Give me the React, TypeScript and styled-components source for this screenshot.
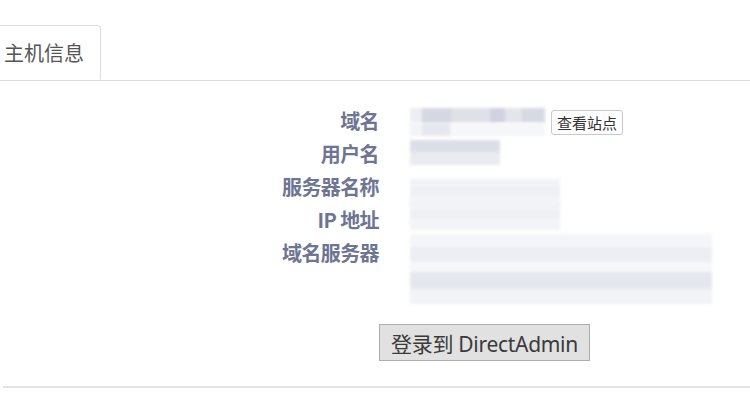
import React from "react";
import styled, { createGlobalStyle } from "styled-components";

const Global = createGlobalStyle`
  html, body { margin: 0; padding: 0; background: #fff; }
  body { font-family: "Noto Sans", "Noto Sans CJK SC", sans-serif; }
`;

const Page = styled.div`
  width: 750px;
  height: 417px;
  overflow: hidden;
  padding-top: 25px;
  box-sizing: border-box;
`;

const TabBar = styled.div`
  display: flex;
  border-bottom: 1px solid #dedede;
  height: 55px;
`;

const Tab = styled.div`
  margin-left: -1px;
  width: 102px;
  height: 55px;
  box-sizing: border-box;
  border: 1px solid #dedede;
  border-bottom: 1px solid #fff;
  border-radius: 0 4px 0 0;
  background: #fff;
  display: flex;
  align-items: center;
  padding-left: 4px;
  font-family: "Noto Sans CJK SC", sans-serif;
  font-size: 20px;
  color: #555;
  margin-bottom: -1px;
`;

const InfoGrid = styled.div`
  display: grid;
  grid-template-columns: 379px 1fr;
  column-gap: 31px;
  padding-top: 23px;
`;

const Label = styled.div<{ $tall?: boolean }>`
  text-align: right;
  font-family: "Noto Sans CJK SC", sans-serif;
  font-weight: 700;
  font-size: 20px;
  line-height: 33px;
  height: ${(p) => (p.$tall ? "70px" : "33px")};
  color: #6e7593;
  letter-spacing: -0.6px;
`;

const Value = styled.div<{ $tall?: boolean }>`
  display: flex;
  align-items: center;
  gap: 6px;
  height: ${(p) => (p.$tall ? "70px" : "33px")};
`;

const Blur = styled.div<{ $w: number; $h: number; $bg: string; $lift?: number }>`
  width: ${(p) => p.$w}px;
  height: ${(p) => p.$h}px;
  background: ${(p) => p.$bg};
  filter: blur(1.5px);
  transform: translateY(${(p) => p.$lift ?? 0}px);
`;

const SmallButton = styled.button`
  font-family: "Noto Sans CJK SC", sans-serif;
  font-size: 15px;
  line-height: 21px;
  height: 25px;
  padding: 0 5px;
  background: #fdfdfd;
  border: 1px solid #c9c9c9;
  border-radius: 3px;
  color: #333;
  transform: translateY(2px);
`;

const Footer = styled.div`
  display: flex;
  justify-content: flex-start;
  padding-left: 379px;
  padding-top: 18px;
`;

const LoginButton = styled.button`
  font-family: "Noto Sans", "Noto Sans CJK SC", sans-serif;
  font-size: 21px;
  height: 37px;
  width: 211px;
  padding: 0;
  background: #e1e1e1;
  border: 1px solid #adadad;
  color: #3a3a3a;
  border-radius: 0;
  letter-spacing: -0.3px;
`;

const Divider = styled.div`
  margin: 25px 0 0 3px;
  height: 2px;
  background: #e3e3e3;
`;

const row1 =
  "linear-gradient(90deg, #eceef3 0 12px, #d5d8e3 12px 42px, #dfe1e9 42px 80px, #d0d3df 80px 95px, #e3e5ec 95px 112px, #d7dae5 112px 135px)";
const row1b =
  "linear-gradient(90deg, #f3f4f7 0 12px, #e6e8ef 12px 40px, #f6f7f9 40px 135px)";
const row2 =
  "linear-gradient(180deg, #dcdfe8 0 50%, #e9ebf0 50% 100%)";
const rows34 =
  "linear-gradient(180deg, #f2f3f6 0 30%, #eef0f4 30% 60%, #f3f4f7 60% 100%)";
const row5 =
  "linear-gradient(180deg, #f4f5f8 0 18%, #eceef3 18% 40%, #f6f7f9 40% 55%, #e5e7ee 55% 78%, #f2f3f6 78% 100%)";

export default function App() {
  return (
    <>
      <Global />
      <Page>
        <TabBar>
          <Tab>主机信息</Tab>
        </TabBar>
        <InfoGrid>
          <Label>域名</Label>
          <Value>
            <div>
              <Blur $w={135} $h={15} $bg={row1} $lift={1} />
              <Blur $w={135} $h={13} $bg={row1b} $lift={1} />
            </div>
            <SmallButton>查看站点</SmallButton>
          </Value>
          <Label>用户名</Label>
          <Value>
            <Blur $w={90} $h={25} $bg={row2} $lift={-1} />
          </Value>
          <Label>服务器名称</Label>
          <Value>
            <Blur $w={150} $h={28} $bg={rows34} $lift={6} />
          </Value>
          <Label>IP 地址</Label>
          <Value>
            <Blur $w={150} $h={28} $bg={rows34} $lift={-4} />
          </Value>
          <Label $tall>域名服务器</Label>
          <Value $tall>
            <Blur $w={302} $h={70} $bg={row5} $lift={-2} />
          </Value>
        </InfoGrid>
        <Footer>
          <LoginButton>登录到 DirectAdmin</LoginButton>
        </Footer>
        <Divider />
      </Page>
    </>
  );
}
